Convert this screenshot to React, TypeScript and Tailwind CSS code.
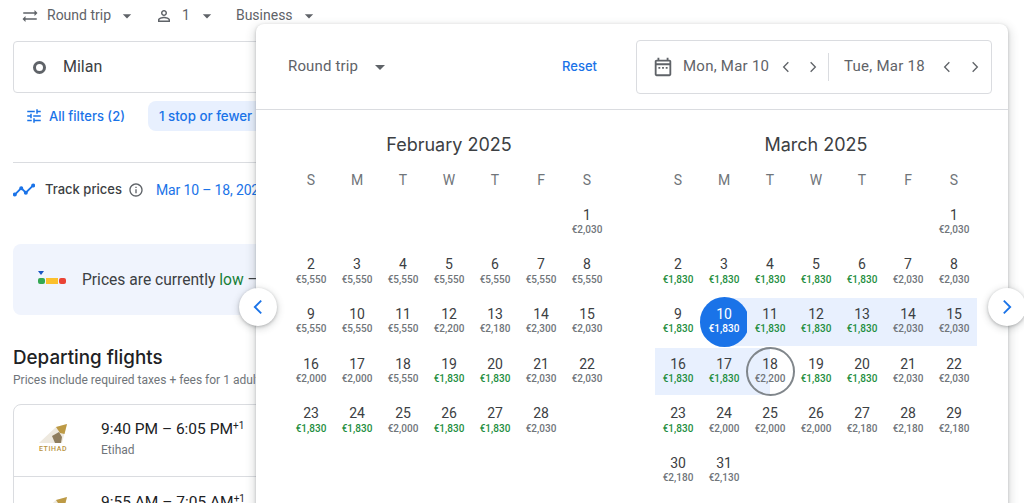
import React from "react";

type Day = { d: number; p: number; g?: boolean };

const mk = (list: [number, number, boolean?][]): Day[] => list.map(([d, p, g]) => ({ d, p, g }));

const feb = mk([
  [1, 2030], [2, 5550], [3, 5550], [4, 5550], [5, 5550], [6, 5550], [7, 5550], [8, 5550],
  [9, 5550], [10, 5550], [11, 5550], [12, 2200], [13, 2180], [14, 2300], [15, 2030],
  [16, 2000], [17, 2000], [18, 5550], [19, 1830, true], [20, 1830, true], [21, 2030], [22, 2030],
  [23, 1830, true], [24, 1830, true], [25, 2000], [26, 1830, true], [27, 1830, true], [28, 2030],
]);
const mar = mk([
  [1, 2030], [2, 1830, true], [3, 1830, true], [4, 1830, true], [5, 1830, true], [6, 1830, true], [7, 2030], [8, 2030],
  [9, 1830, true], [10, 1830, true], [11, 1830, true], [12, 1830, true], [13, 1830, true], [14, 2030], [15, 2030],
  [16, 1830, true], [17, 1830, true], [18, 2200], [19, 1830, true], [20, 1830, true], [21, 2030], [22, 2030],
  [23, 1830, true], [24, 2000], [25, 2000], [26, 2000], [27, 2180], [28, 2180], [29, 2180],
  [30, 2180], [31, 2130],
]);

const euro = (p: number) => "€" + p.toLocaleString("en-US");

const Caret = ({ className }: { className: string }) => (
  <svg viewBox="0 0 24 24" className={className} fill="currentColor"><path d="M7 10l5 5 5-5z" /></svg>
);
const Chev = ({ left, className }: { left?: boolean; className: string }) => (
  <svg viewBox="0 0 24 24" className={className} fill="none" stroke="currentColor" strokeWidth="2">
    <path d={left ? "M15.5 5l-7 7 7 7" : "M8.5 5l7 7-7 7"} />
  </svg>
);

function Cell({ day, march }: { day: Day; march?: boolean }) {
  const start = march && day.d === 10;
  const end = march && day.d === 18;
  const inRange = march && day.d > 10 && day.d < 18;
  const bg = start
    ? "bg-[linear-gradient(90deg,transparent_50%,#e8f0fe_50%)]"
    : end
    ? "bg-[linear-gradient(90deg,#e8f0fe_50%,transparent_50%)]"
    : inRange
    ? "bg-[#e8f0fe]"
    : "";
  return (
    <div className={`relative flex flex-col items-center justify-center pb-[2.5px] ${bg}`}>
      {start && <div className="absolute -inset-y-px left-[-1px] right-[-2px] rounded-full bg-[#1a73e8]" />}
      {end && <div className="absolute -inset-y-px left-[-1px] right-[-2px] rounded-full border-2 border-[#80868b]" />}
      <span className={`relative text-[14px] leading-[16px] ${start ? "text-white" : "text-[#3c4043]"}`}>{day.d}</span>
      <span
        className={`relative mt-[1.5px] text-[10px] leading-[12px] font-medium ${
          start ? "text-white" : day.g ? "text-[#1e8e3e]" : "text-[#70757a]"
        }`}
      >
        {euro(day.p)}
      </span>
    </div>
  );
}

function Month({ title, days, march }: { title: string; days: Day[]; march?: boolean }) {
  return (
    <div className="w-[322px]">
      <div className="mt-[23px] h-[24px] text-center text-[18px] leading-[24px] text-[#3c4043] font-['Inter',sans-serif]">
        {title}
      </div>
      <div className="mt-[13px] grid h-[20px] grid-cols-7 text-center text-[14px] leading-[20px] text-[#70757a]">
        {["S", "M", "T", "W", "T", "F", "S"].map((l, i) => (
          <div key={i}>{l}</div>
        ))}
      </div>
      <div className="mt-[9px] grid grid-cols-7 auto-rows-[47.6px] gap-y-[2px]">
        {Array.from({ length: 6 }).map((_, i) => (
          <div key={"e" + i} />
        ))}
        {days.map((day) => (
          <Cell key={day.d} day={day} march={march} />
        ))}
      </div>
    </div>
  );
}

const Etihad = () => (
  <div className="flex w-[32px] flex-col items-center">
    <svg viewBox="0 0 28 20" className="h-[20px] w-[28px]">
      <path d="M0 19 L17 3 L28 0 L23 19 Z" fill="#eee9df" />
      <path d="M17 3 L28 0 L25.5 10 L21 9 Z" fill="#bd9a45" />
      <path d="M13 12 L20 8 L23 13 L22 19 L16 19 Z" fill="#8f7d5e" />
    </svg>
    <span className="mt-[1px] text-[7px] leading-[8px] font-medium tracking-[0.6px] text-[#b8923c]">ETIHAD</span>
  </div>
);

export default function App() {
  return (
    <div className="relative h-[503px] w-[1024px] overflow-hidden bg-white font-['Roboto',sans-serif] text-[#3c4043]">
      {/* page underneath */}
      <div className="w-[1000px] pl-[13px]">
        <div className="flex h-[31px] items-center pl-[8px] text-[14px] text-[#5f6368]">
          <svg viewBox="0 0 24 24" className="h-[18px] w-[18px]" fill="currentColor">
            <path d="M22 8l-4-4v3H3v2h15v3l4-4zM2 16l4 4v-3h15v-2H6v-3l-4 4z" />
          </svg>
          <span className="ml-[8px]">Round trip</span>
          <Caret className="ml-[6px] h-[20px] w-[20px]" />
          <svg viewBox="0 0 24 24" className="ml-[18px] h-[18px] w-[18px]" fill="currentColor">
            <path d="M12 5.9c1.16 0 2.1.94 2.1 2.1s-.94 2.1-2.1 2.1S9.9 9.16 9.9 8s.94-2.1 2.1-2.1m0 9c2.97 0 6.1 1.46 6.1 2.1v1.1H5.9V17c0-.64 3.13-2.1 6.1-2.1M12 4C9.79 4 8 5.79 8 8s1.79 4 4 4 4-1.79 4-4-1.79-4-4-4zm0 9c-2.67 0-8 1.34-8 4v3h16v-3c0-2.66-5.33-4-8-4z" />
          </svg>
          <span className="ml-[9px]">1</span>
          <Caret className="ml-[7px] h-[20px] w-[20px]" />
          <span className="ml-[19px]">Business</span>
          <Caret className="ml-[6px] h-[20px] w-[20px]" />
        </div>

        <div className="mt-[10px] flex h-[52px] w-[700px] items-center rounded-[4px] border border-[#dadce0] pl-[19px] text-[16px] text-[#3c4043]">
          <span className="h-[13px] w-[13px] rounded-full border-[3px] border-[#5f6368]" />
          <span className="ml-[17px] mb-[1px]">Milan</span>
        </div>

        <div className="mt-[8px] flex h-[30px] items-center font-['Inter',sans-serif] text-[13px] font-medium text-[#1a73e8]">
          <svg viewBox="0 0 24 24" className="ml-[12px] h-[18px] w-[18px]" fill="currentColor">
            <path d="M3 17v2h6v-2H3zM3 5v2h10V5H3zm10 16v-2h8v-2h-8v-2h-2v6h2zM7 9v2H3v2h4v2h2V9H7zm14 4v-2H11v2h10zm-6-4h2V7h4V5h-4V3h-2v6z" />
          </svg>
          <span className="ml-[6px] mt-[2px] w-[99px] whitespace-nowrap">All filters (2)</span>
          <span className="flex h-[30px] w-[200px] items-center rounded-[8px] bg-[#e8f0fe] pt-[2px] pl-[11px] text-[13.3px] whitespace-nowrap">1 stop or fewer</span>
        </div>

        <div className="mt-[31px] h-px w-[700px] bg-[#dadce0]" />

        <div className="mt-[14px] flex h-[26px] items-center whitespace-nowrap">
          <svg viewBox="0 0 24 24" className="h-[22px] w-[22px] text-[#1a73e8]" fill="none" stroke="currentColor" strokeWidth="2">
            <path d="M2 17l7-7 5 5 8-8" />
            <circle cx="2" cy="17" r="1.2" fill="currentColor" />
            <circle cx="9" cy="10" r="1.2" fill="currentColor" />
            <circle cx="14" cy="15" r="1.2" fill="currentColor" />
            <circle cx="22" cy="7" r="1.2" fill="currentColor" />
          </svg>
          <span className="ml-[10px] font-['Inter',sans-serif] text-[13px] font-medium text-[#3c4043]">Track prices</span>
          <svg viewBox="0 0 24 24" className="ml-[6px] h-[16px] w-[16px] text-[#5f6368]" fill="currentColor">
            <path d="M11 7h2v2h-2zm0 4h2v6h-2zm1-9C6.48 2 2 6.48 2 12s4.48 10 10 10 10-4.48 10-10S17.52 2 12 2zm0 18c-4.41 0-8-3.59-8-8s3.59-8 8-8 8 3.59 8 8-3.59 8-8 8z" />
          </svg>
          <span className="ml-[12px] text-[14px] tracking-[-0.15px] text-[#1a73e8]">Mar 10 – 18, 2025</span>
        </div>

        <div className="mt-[41px] flex h-[71px] w-[700px] items-center rounded-[8px] bg-[#f0f4fd] pl-[25px] text-[15.6px] whitespace-nowrap">
          <svg viewBox="0 0 28 18" className="h-[18px] w-[28px]">
            <path d="M0 0h6l-3 4z" fill="#1a56c4" />
            <rect x="0" y="7" width="7" height="6" rx="2" fill="#34a853" />
            <rect x="8" y="7" width="12" height="6" fill="#fbc02d" />
            <rect x="21" y="7" width="7" height="6" rx="2" fill="#ea4335" />
          </svg>
          <span className="ml-[16px] mt-[2px]">
            Prices are currently <span className="text-[#188038]">low</span> – €1,830 is typical
          </span>
        </div>

        <h2 className="mt-[30px] font-['Inter',sans-serif] text-[18.8px] leading-[26px] font-medium text-[#202124]">Departing flights</h2>
        <p className="mt-[1px] text-[12px] leading-[16px] text-[#70757a] whitespace-nowrap">
          Prices include required taxes + fees for 1 adult
        </p>

        <div className="mt-[16px] w-[700px] rounded-t-[8px] border border-[#dadce0]">
          <div className="flex h-[72px] items-center border-b border-[#dadce0] pb-[4px] pl-[23px]">
            <Etihad />
            <div className="ml-[32px]">
              <div className="text-[15.5px] leading-[20px] text-[#202124]">
                9:40 PM – 6:05 PM<sup className="text-[10px]">+1</sup>
              </div>
              <div className="mt-[3px] text-[12px] leading-[16px] text-[#70757a]">Etihad</div>
            </div>
          </div>
          <div className="flex h-[72px] items-center pb-[4px] pl-[23px]">
            <Etihad />
            <div className="ml-[32px]">
              <div className="text-[15.5px] leading-[20px] text-[#202124]">
                9:55 AM – 7:05 AM<sup className="text-[10px]">+1</sup>
              </div>
              <div className="mt-[3px] text-[12px] leading-[16px] text-[#70757a]">Etihad</div>
            </div>
          </div>
        </div>
      </div>

      {/* date picker overlay */}
      <div className="absolute left-[256px] top-[24px] h-[600px] w-[752px] rounded-[8px] bg-white shadow-[0_1px_3px_rgba(60,64,67,0.3),0_4px_8px_3px_rgba(60,64,67,0.15)]">
        <div className="flex h-[86px] items-center border-b border-[#dadce0] pl-[32px] pr-[16px]">
          <span className="mb-[1px] text-[15px] tracking-[0.15px] text-[#5f6368]">Round trip</span>
          <Caret className="ml-[10px] h-[24px] w-[24px] text-[#5f6368]" />
          <span className="ml-[170px] font-['Inter',sans-serif] text-[13px] font-medium text-[#1a73e8]">Reset</span>
          <div className="ml-auto flex h-[54px] w-[356px] items-center rounded-[4px] border border-[#dadce0] text-[15px] tracking-[0.25px] text-[#5f6368] whitespace-nowrap">
            <svg viewBox="0 0 24 24" className="ml-[15px] h-[22px] w-[22px]" fill="currentColor">
              <path d="M19 4h-1V2h-2v2H8V2H6v2H5c-1.1 0-2 .9-2 2v14c0 1.1.9 2 2 2h14c1.1 0 2-.9 2-2V6c0-1.1-.9-2-2-2zm0 16H5V10h14v10zM5 8V6h14v2H5z" />
              <path d="M7 12h2v2H7zM11 12h2v2h-2zM15 12h2v2h-2z" />
            </svg>
            <span className="ml-[9px] w-[87px]">Mon, Mar 10</span>
            <Chev left className="ml-[8px] h-[16px] w-[16px]" />
            <Chev className="ml-[11px] h-[16px] w-[16px]" />
            <div className="ml-[7px] h-[28px] w-px bg-[#dadce0]" />
            <span className="ml-[15px] w-[82px]">Tue, Mar 18</span>
            <Chev left className="ml-[13px] h-[16px] w-[16px]" />
            <Chev className="ml-[12px] h-[16px] w-[16px]" />
          </div>
        </div>
        <div className="flex gap-[45px] pl-[32px]">
          <Month title="February 2025" days={feb} />
          <Month title="March 2025" days={mar} march />
        </div>
      </div>

      <button className="absolute left-[239px] top-[288px] flex h-[38px] w-[38px] items-center justify-center rounded-full bg-white text-[#1a73e8] shadow-[0_1px_3px_rgba(60,64,67,0.3),0_2px_6px_2px_rgba(60,64,67,0.15)]">
        <Chev left className="h-[22px] w-[22px]" />
      </button>
      <button className="absolute left-[988px] top-[288px] flex h-[38px] w-[38px] items-center justify-center rounded-full bg-white text-[#1a73e8] shadow-[0_1px_3px_rgba(60,64,67,0.3),0_2px_6px_2px_rgba(60,64,67,0.15)]">
        <Chev className="h-[22px] w-[22px]" />
      </button>
    </div>
  );
}
